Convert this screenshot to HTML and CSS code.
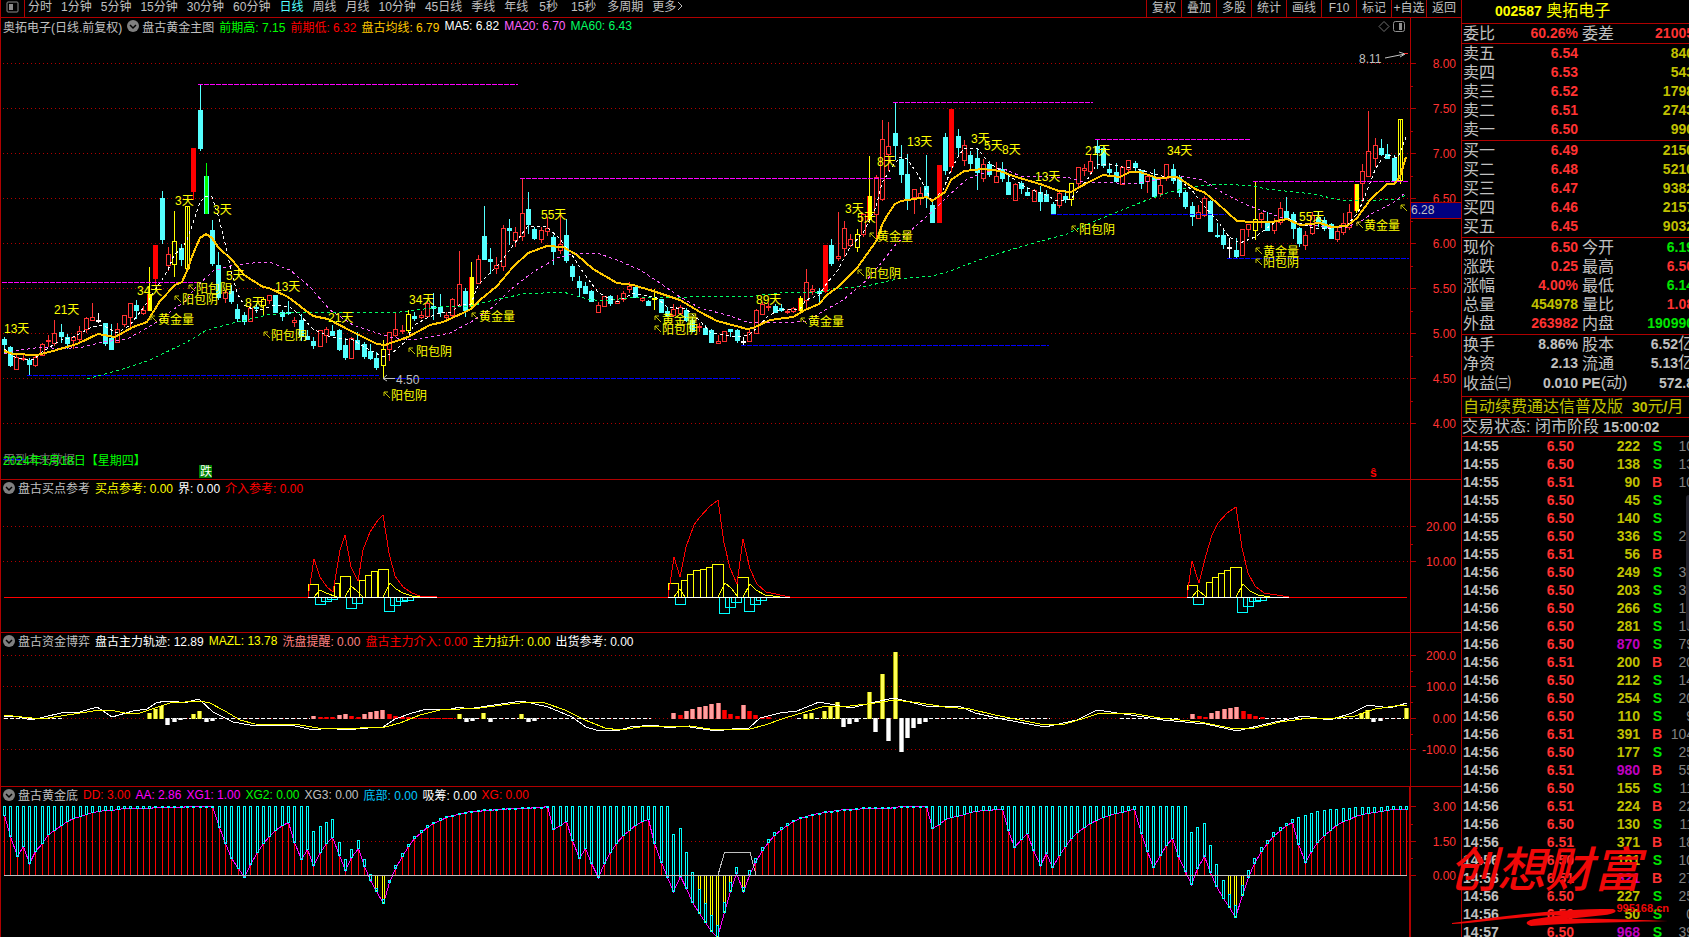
FILE: index.html
```
<!DOCTYPE html>
<html lang="zh-CN">
<head>
  <meta charset="UTF-8" />
  <meta name="viewport" content="width=device-width, initial-scale=1.0"/>
  <title>002587 奥拓电子</title>
  <link rel="stylesheet" href="styles.css">
</head>
<body>
  <div class="terminal">
    <main class="charts">
      <!-- Period + tool bar -->
      <nav class="toolbar">
        <button class="layout-btn" aria-label="布局">
          <svg width="13" height="12" viewBox="0 0 13 12"><rect x="1" y="1" width="11" height="10" rx="1" fill="none" stroke="#8c8c8c"/><rect x="3" y="3" width="4" height="6" fill="#8c8c8c"/></svg>
        </button>
        <div class="periods">
          <button>分时</button>
          <button>1分钟</button>
          <button>5分钟</button>
          <button>15分钟</button>
          <button>30分钟</button>
          <button>60分钟</button>
          <button class="active">日线</button>
          <button>周线</button>
          <button>月线</button>
          <button>10分钟</button>
          <button>45日线</button>
          <button>季线</button>
          <button>年线</button>
          <button class="seconds">5秒</button>
          <button class="seconds">15秒</button>
          <button>多周期</button>
          <button>更多<svg width="8" height="10" viewBox="0 0 8 10"><path d="M2 1 L6 5 L2 9" fill="none" stroke="#c0c0c0"/></svg></button>
        </div>
        <div class="tools">
          <button>复权</button>
          <button>叠加</button>
          <button>多股</button>
          <button>统计</button>
          <button>画线</button>
          <button>F10</button>
          <button>标记</button>
          <button>+自选</button>
          <button>返回</button>
        </div>
      </nav>

      <!-- K line -->
      <section class="panel">
        <div class="legend">
          <span class="silver">奥拓电子(日线.前复权)</span>
          <svg class="fold" viewBox="0 0 12 12"><circle cx="6" cy="6" r="6" fill="#808080"/><path d="M3 5 L6 8 L9 5" fill="none" stroke="#000" stroke-width="1.5"/></svg>
          <span class="silver">盘古黄金主图</span>
          <span class="green">前期高: 7.15</span>
          <span class="red">前期低: 6.32</span>
          <span class="gold">盘古均线: 6.79</span>
          <span class="white">MA5: 6.82</span>
          <span class="pink">MA20: 6.70</span>
          <span class="mint">MA60: 6.43</span>
          <svg class="corner" width="28" height="13" viewBox="0 0 28 13"><path d="M6 1.500 L11 6.500 L6 11.500 L1 6.500 Z" fill="none" stroke="#707070"/><rect x="15.500" y="1.500" width="11" height="10" rx="2" fill="none" stroke="#909090"/><rect x="21" y="3" width="3" height="7" fill="#909090"/></svg>
        </div>
        <svg class="plot plot-main" id="mainPlot" viewBox="1 36 1409 443" preserveAspectRatio="none"></svg>
        <svg class="axis" id="mainAxis" viewBox="1411 18 50 461" preserveAspectRatio="none"></svg>
      </section>

      <!-- Buy point reference -->
      <section class="panel">
        <div class="legend">
          <svg class="fold" viewBox="0 0 12 12"><circle cx="6" cy="6" r="6" fill="#808080"/><path d="M3 5 L6 8 L9 5" fill="none" stroke="#000" stroke-width="1.5"/></svg>
          <span class="silver">盘古买点参考</span>
          <span class="yellow">买点参考: 0.00</span>
          <span class="white">界: 0.00</span>
          <span class="red">介入参考: 0.00</span>
        </div>
        <svg class="plot plot-buy" id="buyPlot" viewBox="1 497 1409 135" preserveAspectRatio="none"></svg>
        <svg class="axis" id="buyAxis" viewBox="1411 480 50 152" preserveAspectRatio="none"></svg>
      </section>

      <!-- Capital flow -->
      <section class="panel">
        <div class="legend">
          <svg class="fold" viewBox="0 0 12 12"><circle cx="6" cy="6" r="6" fill="#808080"/><path d="M3 5 L6 8 L9 5" fill="none" stroke="#000" stroke-width="1.5"/></svg>
          <span class="silver">盘古资金博弈</span>
          <span class="white">盘古主力轨迹: 12.89</span>
          <span class="yellow">MAZL: 13.78</span>
          <span class="salmon">洗盘提醒: 0.00</span>
          <span class="red">盘古主力介入: 0.00</span>
          <span class="yellow">主力拉升: 0.00</span>
          <span class="white">出货参考: 0.00</span>
        </div>
        <svg class="plot plot-flow" id="flowPlot" viewBox="1 650 1409 136" preserveAspectRatio="none"></svg>
        <svg class="axis" id="flowAxis" viewBox="1411 633 50 153" preserveAspectRatio="none"></svg>
      </section>

      <!-- Golden bottom -->
      <section class="panel selected">
        <div class="legend">
          <svg class="fold" viewBox="0 0 12 12"><circle cx="6" cy="6" r="6" fill="#808080"/><path d="M3 5 L6 8 L9 5" fill="none" stroke="#000" stroke-width="1.5"/></svg>
          <span class="silver">盘古黄金底</span>
          <span class="red">DD: 3.00</span>
          <span class="magenta">AA: 2.86</span>
          <span class="magenta">XG1: 1.00</span>
          <span class="green">XG2: 0.00</span>
          <span class="silver">XG3: 0.00</span>
          <span class="sky">底部: 0.00</span>
          <span class="white">吸筹: 0.00</span>
          <span class="red">XG: 0.00</span>
        </div>
        <svg class="plot plot-bottom" id="bottomPlot" viewBox="1 804 1409 133" preserveAspectRatio="none"></svg>
        <svg class="axis" id="bottomAxis" viewBox="1411 787 50 150" preserveAspectRatio="none"></svg>
      </section>
    </main>

    <!-- Quote side bar -->
    <aside class="quote">
      <h1><b>002587</b> 奥拓电子</h1>
      <table class="info single">
        <tr><th>委比</th><td class="up">60.26%</td><th>委差</th><td class="up">21005</td></tr>
      </table>
      <table class="info">
        <tr><th>卖五</th><td class="up">6.54</td><th></th><td class="vol">840</td></tr>
        <tr><th>卖四</th><td class="up">6.53</td><th></th><td class="vol">543</td></tr>
        <tr><th>卖三</th><td class="up">6.52</td><th></th><td class="vol">1798</td></tr>
        <tr><th>卖二</th><td class="up">6.51</td><th></th><td class="vol">2743</td></tr>
        <tr><th>卖一</th><td class="up">6.50</td><th></th><td class="vol">990</td></tr>
      </table>
      <table class="info">
        <tr><th>买一</th><td class="up">6.49</td><th></th><td class="vol">2150</td></tr>
        <tr><th>买二</th><td class="up">6.48</td><th></th><td class="vol">5210</td></tr>
        <tr><th>买三</th><td class="up">6.47</td><th></th><td class="vol">9382</td></tr>
        <tr><th>买四</th><td class="up">6.46</td><th></th><td class="vol">2157</td></tr>
        <tr><th>买五</th><td class="up">6.45</td><th></th><td class="vol">9032</td></tr>
      </table>
      <table class="info">
        <tr><th>现价</th><td class="up">6.50</td><th>今开</th><td class="down">6.19</td></tr>
        <tr><th>涨跌</th><td class="up">0.25</td><th>最高</th><td class="up">6.50</td></tr>
        <tr><th>涨幅</th><td class="up">4.00%</td><th>最低</th><td class="down">6.14</td></tr>
        <tr><th>总量</th><td class="vol">454978</td><th>量比</th><td class="up">1.08</td></tr>
        <tr><th>外盘</th><td class="up">263982</td><th>内盘</th><td class="down">190990</td></tr>
      </table>
      <table class="info stats">
        <tr><th>换手</th><td>8.86%</td><th>股本</th><td>6.52<i>亿</i></td></tr>
        <tr><th>净资</th><td>2.13</td><th>流通</th><td>5.13<i>亿</i></td></tr>
        <tr><th>收益㈢</th><td>0.010</td><th><b>PE</b>(动)</th><td>572.8</td></tr>
      </table>
      <a class="promo" href="#">自动续费通达信普及版 &nbsp;<b>30</b>元<b>/</b>月</a>
      <p class="status">交易状态: 闭市阶段 <b>15:00:02</b></p>
      <table class="ticks">
        <tbody id="ticks"></tbody>
      </table>
      <div class="drawer"></div>
    </aside>

    <div class="watermark">
      <span class="brand">创想财富</span>
      <svg width="220" height="24" viewBox="0 0 220 24">
        <path d="M3 19 C50 13 100 5 164 5 C170 7 165 10 156 11 L118 15 C150 14 190 16 219 17 C180 18 120 19 82 22 C74 20 78 16 86 15 L112 11 C70 12 40 18 3 20 Z" fill="#f00808"/>
      </svg>
      <span class="site">995168.cn</span>
    </div>
  </div>

  <script src="charts.js"></script>
</body>
</html>
```
FILE: styles.css
```
* {
  box-sizing: border-box;
}

body {
  margin: 0;
  background: #000;
  color: #c0c0c0;
  font-family: "Liberation Sans", "Noto Sans CJK SC", sans-serif;
  font-size: 12px;
  overflow: hidden;
}

button {
  padding: 0;
  border: none;
  background: none;
  color: inherit;
  font: inherit;
  cursor: pointer;
}

.terminal {
  position: relative;
  display: grid;
  grid-template-columns: 1fr 228px;
  height: 100vh;
  overflow: hidden;
}

.charts {
  min-width: 0;
}

/* toolbar */
.toolbar {
  display: flex;
  height: 18px;
  line-height: 15px;
  border-bottom: 1px solid #b00000;
  border-left: 1px solid #b00000;
  white-space: nowrap;
}

.layout-btn {
  width: 24px;
  padding-bottom: 3px;
  border-right: 1px solid #b00000;
  line-height: 0;
}

.periods {
  display: flex;
  flex: 1;
  gap: 9px;
  padding-left: 3px;
}

.periods button,
.tools button {
  display: block;
  height: 15px;
  line-height: 15px;
}

.periods .seconds {
  padding: 0 2px;
}

.periods .active {
  color: #54ffff;
}

.tools {
  display: flex;
}

.tools button {
  width: 35px;
  height: 17px;
  border-left: 1px solid #b00000;
}

/* chart panels */
.panel {
  display: grid;
  grid-template-columns: 1fr 51px;
  border-left: 1px solid #b00000;
  border-bottom: 1px solid #b00000;
}

.legend {
  display: flex;
  align-items: center;
  gap: 5px;
  height: 17px;
  padding: 0 0 2px 2px;
  white-space: nowrap;
}

.panel:first-of-type .legend {
  height: 18px;
}

.fold {
  width: 12px;
  height: 12px;
  margin-right: -2px;
}

.corner {
  margin-left: auto;
  margin-right: 4px;
}

.plot {
  grid-column: 1;
  display: block;
  width: 100%;
}

.plot-main { height: 443px; }
.plot-buy { height: 135px; }
.plot-flow { height: 136px; }
.plot-bottom { height: 133px; }

.axis {
  grid-column: 2;
  grid-row: 1 / 3;
  display: block;
  width: 51px;
  height: 100%;
  border-left: 1px solid #b00000;
}

.selected {
  border-bottom: none;
}

.selected .axis {
  outline: 1px solid #b00000;
}

svg text {
  font-size: 12px;
}

.silver { color: #c0c0c0; }
.green { color: #00ff00; }
.red { color: #ff0000; }
.gold { color: #ffc800; }
.white { color: #fff; }
.pink { color: #ff64ff; }
.mint { color: #00ff64; }
.yellow { color: #ffff00; }
.salmon { color: #ff8080; }
.magenta { color: #ff00ff; }
.sky { color: #00c8ff; }

/* quote bar */
.quote {
  position: relative;
  border-left: 1px solid #b00000;
  overflow: hidden;
}

.quote h1 {
  height: 23px;
  margin: 0;
  padding-left: 33px;
  color: #ffff00;
  font-size: 16px;
  font-weight: normal;
  line-height: 21px;
}

.quote b {
  font-size: 14px;
}

.info,
.ticks {
  width: calc(100% + 5px);
  table-layout: fixed;
  border-collapse: separate;
  border-spacing: 0;
  border-top: 1px solid #b00000;
}

.info {
  margin-bottom: 1px;
}

.info tr {
  height: 19px;
}

.info th {
  width: 50px;
  padding: 0 0 0 1px;
  font-size: 16px;
  font-weight: normal;
  line-height: 19px;
  text-align: left;
  white-space: nowrap;
}

.info td {
  padding: 0;
  font-size: 14px;
  font-weight: bold;
  line-height: 19px;
  text-align: right;
  white-space: nowrap;
}

.info th + td {
  width: 64px;
}

.info th:nth-child(3) {
  padding-left: 4px;
}

.info i {
  font-size: 16px;
  font-style: normal;
  font-weight: normal;
  line-height: 16px;
}

.single {
  margin-bottom: 0;
}

.stats {
  margin-bottom: 3px;
}

.up { color: #ff3232; }
.down { color: #00e600; }
.vol { color: #c0c000; }
.big { color: #c000c0; }

.promo {
  display: block;
  height: 21px;
  padding-left: 1px;
  border-top: 1px solid #b00000;
  color: #c0c000;
  font-size: 16px;
  line-height: 20px;
  text-decoration: none;
  white-space: nowrap;
}

.status {
  height: 19px;
  margin: 0;
  border-top: 1px solid #b00000;
  font-size: 16px;
  line-height: 18px;
  white-space: nowrap;
}

.ticks td {
  height: 18px;
  padding: 0;
  font-size: 14px;
  font-weight: bold;
  line-height: 18px;
  text-align: right;
}

.ticks td:nth-child(1) { width: 38px; padding-left: 1px; text-align: left; }
.ticks td:nth-child(2) { width: 74px; }
.ticks td:nth-child(3) { width: 66px; }
.ticks td:nth-child(4) { width: 22px; }
.ticks td:nth-child(5) { color: #808080; font-weight: normal; }

.drawer {
  position: absolute;
  right: 0;
  top: 495px;
  width: 3px;
  height: 134px;
  border-radius: 3px 0 0 3px;
  background: #23232d;
}

/* watermark */
.watermark {
  position: absolute;
  right: 20px;
  top: 838px;
  width: 220px;
  color: #f00808;
}

.watermark .brand {
  display: block;
  height: 66px;
  font-size: 48px;
  font-style: italic;
  font-weight: 500;
  line-height: 66px;
}

.watermark svg {
  display: block;
}

.watermark .site {
  position: absolute;
  right: 0;
  top: 64px;
  font-size: 11px;
  font-weight: bold;
}
```
FILE: charts.js
```
const RED = '#ff3232';
const CYAN = '#54ffff';
const YELLOW = '#ffff00';
const GRID = '#b00000';

function add(parent, tag, attrs, text) {
  const el = document.createElementNS('http://www.w3.org/2000/svg', tag);
  for (const key in attrs) el.setAttribute(key, attrs[key]);
  if (text !== undefined) el.textContent = text;
  parent.appendChild(el);
  return el;
}

function rect(svg, x, y, w, h, fill) {
  add(svg, 'rect', { x, y, width: w, height: Math.max(h, 1), fill, 'shape-rendering': 'crispEdges' });
}

function box(svg, x, y, w, h, stroke) {
  add(svg, 'rect', { x: x + 0.5, y: y + 0.5, width: w - 1, height: Math.max(h - 1, 1), fill: 'none', stroke, 'shape-rendering': 'crispEdges' });
}

function line(svg, points, stroke, width, dash) {
  const attrs = { points, fill: 'none', stroke, 'stroke-width': width || 1, 'shape-rendering': 'crispEdges' };
  if (dash) attrs['stroke-dasharray'] = dash;
  add(svg, 'polyline', attrs);
}

function grid(svg, rows) {
  rows.forEach(y => line(svg, `3,${y + 0.5} 1408,${y + 0.5}`, GRID, 1, '1 3'));
}

// five pixels on, one off
function level(svg, x1, x2, y, color) {
  for (let x = x1; x < x2; x += 6) rect(svg, x, y, Math.min(5, x2 - x), 1, color);
}

function axis(id, labels, minor) {
  const svg = document.getElementById(id);
  labels.forEach(([y, text]) => {
    rect(svg, 1411, y, 5, 1, GRID);
    add(svg, 'text', { x: 1456, y: y + 5, 'text-anchor': 'end', fill: RED }, text);
  });
  minor.forEach(y => rect(svg, 1411, y, 2, 1, GRID));
  return svg;
}

// ---------- K line ----------
// x, high, body top, body bottom, low, kind
// c falling, r rising, R limit up, Y/y signal (filled/hollow), d double box, g green, w doji
const candles = `
4 337 339 344 353 c|10 346 347 365 367 c|16 353 357 369 369 r|23 355 358 359 361 r|29 358 360 364 375 c
35 355 357 365 367 r|42 343 344 355 356 r|48 335 340 341 347 r|54 320 333 343 346 r|61 324 332 336 343 c
67 334 337 343 349 c|73 336 337 340 349 r|79 326 331 339 343 r|86 317 318 329 333 r|92 303 317 320 321 r
98 313 320 321 323 w|105 323 323 343 346 c|111 324 338 349 349 c|117 323 329 342 343 r|124 315 315 324 327 r
130 303 303 317 327 r|136 300 305 310 319 c|143 306 310 313 315 r|149 267 294 310 310 Y|155 245 245 278 286 R
162 191 198 239 244 c|168 247 254 265 271 r|174 211 241 264 277 y|181 244 248 259 266 c|187 206 206 268 270 d
193 148 148 191 200 R|200 85 110 148 151 c|206 163 176 213 213 g|212 220 230 263 266 c|218 252 265 297 300 c
225 290 292 298 303 r|231 285 291 301 304 c|237 304 309 318 322 c|244 312 315 321 325 c|250 303 308 321 321 r
256 303 307 308 313 c|263 297 299 305 316 y|269 295 295 300 304 r|275 295 295 312 312 c|282 310 312 316 321 c
288 301 312 313 315 c|294 317 320 322 327 r|301 314 320 336 341 c|307 330 336 339 340 c|313 337 341 345 349 c
320 330 330 346 347 r|326 327 329 335 343 r|332 325 331 335 335 c|339 329 330 349 351 c|345 338 345 357 360 c
351 337 338 358 358 r|357 332 340 349 349 c|364 342 344 356 359 c|370 344 351 358 360 c|376 352 358 367 370 c
383 340 349 365 378 y|389 332 332 349 361 r|395 313 329 335 337 r|402 325 330 331 334 r|408 310 314 330 333 y
414 312 316 318 321 c|421 311 315 317 319 r|427 301 303 316 318 r|433 293 306 308 320 c|440 294 307 312 317 c
446 312 315 317 321 r|452 298 299 315 317 r|459 251 284 305 306 r|465 288 291 310 317 c|471 262 277 306 307 Y
478 255 259 283 283 r|484 206 236 259 260 c|490 248 259 261 274 c|496 257 265 268 274 r|503 225 228 266 271 r
509 219 228 230 245 c|515 227 232 240 247 r|522 178 213 236 241 r|528 192 209 224 234 c|534 227 229 238 240 c
541 227 230 239 243 r|547 217 228 231 236 r|553 235 237 251 265 c|560 215 244 250 254 r|566 219 235 260 263 c
572 264 266 276 281 c|579 276 281 287 297 c|585 282 286 293 294 c|591 290 291 301 301 c|598 302 305 312 312 r
604 296 296 306 306 r|610 295 296 303 306 c|617 295 301 303 303 r|623 291 293 299 302 r|629 282 286 289 293 r
635 286 287 297 297 c|642 297 298 300 302 r|648 300 301 305 305 c|654 289 298 299 310 y|661 299 299 312 313 c
667 307 311 315 317 c|673 304 309 315 317 r|680 305 307 313 315 r|686 308 310 320 322 c|692 317 320 331 332 c
699 323 326 327 332 r|705 325 328 334 335 c|711 329 330 342 343 c|718 335 341 343 344 r|724 331 331 341 341 r
730 329 329 331 337 c|737 329 330 340 343 c|743 337 341 342 345 w|749 330 332 341 341 r|756 309 310 333 334 r
762 302 304 314 315 r|768 303 306 307 311 r|775 304 306 312 313 c|781 304 308 310 312 c|787 309 311 312 314 r
793 307 308 311 313 r|800 296 298 310 313 Y|806 269 282 300 308 r|812 285 289 291 295 r|819 288 291 293 304 c
825 245 245 291 293 R|831 239 245 263 266 c|838 212 256 258 261 r|844 221 228 248 257 r|850 234 239 245 247 r
857 229 234 247 252 y|863 214 214 234 237 r|869 156 196 219 223 Y|876 175 177 214 238 r|882 120 139 199 201 r
888 122 146 154 171 r|895 102 133 145 160 c|901 145 159 174 183 c|907 154 174 200 210 c|914 189 189 197 214 r
920 187 193 197 205 r|926 155 186 197 208 c|932 200 205 222 223 c|939 165 165 222 222 R|945 133 137 170 175 c
951 109 109 166 172 R|958 129 136 147 156 c|964 140 145 160 166 r|970 151 155 163 169 c|977 148 158 172 190 c
983 159 164 178 182 r|989 161 164 174 177 c|996 162 176 182 183 r|1002 162 169 178 182 c|1008 175 182 194 194 c
1015 183 184 200 200 r|1021 181 183 188 194 c|1027 187 192 195 196 c|1034 189 190 201 202 r|1040 186 192 201 211 c
1046 190 194 201 202 c|1053 202 204 213 215 c|1059 190 193 205 208 r|1065 190 196 199 203 c|1071 183 183 199 206 y
1078 167 167 183 187 r|1084 164 168 170 176 r|1090 155 161 171 175 r|1097 140 146 152 169 c|1103 145 148 165 168 c
1109 163 169 172 175 c|1116 163 172 181 183 c|1122 166 167 184 185 r|1128 160 160 169 172 r|1135 161 163 167 172 c
1141 170 170 183 189 c|1147 174 176 181 193 r|1154 169 177 196 197 c|1160 179 185 193 197 r|1166 164 164 178 181 r
1173 164 169 180 184 c|1179 175 177 192 197 c|1185 190 192 206 209 c|1192 202 206 216 226 c|1198 205 212 218 219 r
1204 196 198 215 217 r|1210 200 201 231 231 c|1217 223 235 236 238 c|1223 229 235 244 249 c|1229 238 247 248 258 w
1236 238 250 256 258 c|1242 229 229 255 255 r|1248 224 224 229 237 r|1255 181 219 230 240 y|1261 212 213 219 228 r
1267 212 221 230 231 c|1274 218 221 230 234 r|1280 202 208 222 225 r|1286 197 211 217 219 c|1293 212 214 228 239 c
1299 227 228 243 247 c|1305 231 235 245 250 r|1312 212 215 233 235 r|1318 212 217 222 227 c|1324 217 220 228 231 c
1331 223 224 238 238 c|1337 228 231 239 242 r|1343 213 223 232 235 r|1349 204 212 227 230 r|1356 184 184 210 213 Y
1362 164 171 183 202 r|1368 111 151 176 177 r|1375 138 145 158 167 r|1381 139 148 154 156 c|1387 144 154 158 159 c
1394 155 158 180 182 c|1400 119 119 180 184 d`;

const colors = { c: CYAN, r: RED, R: '#ff0000', Y: YELLOW, y: YELLOW, d: YELLOW, g: '#00ff00', w: '#ffffff' };

function drawCandle(svg, row) {
  const parts = row.trim().split(' ');
  const kind = parts[5];
  const [x, high, top, bottom, low] = parts.map(Number);
  const color = colors[kind];
  rect(svg, x, high, 1, top - high, color);
  rect(svg, x, bottom, 1, low - bottom, color);
  if (kind === 'r' || kind === 'y' || kind === 'd') {
    box(svg, x - 2, top, 5, bottom - top + 1, color);
    if (kind === 'd') rect(svg, x, top, 1, bottom - top, color);
  } else {
    rect(svg, x - 2, top, 5, bottom - top + 1, kind === 'g' ? CYAN : color);
    if (kind === 'g') rect(svg, x - 1, top, 3, bottom - top + 1, color);
    if (kind === 'Y') rect(svg, x - 2, top, 1, bottom - top + 1, '#ff0000');
  }
}

const main = document.getElementById('mainPlot');
grid(main, [63, 108, 153, 198, 243, 288, 333, 378, 423]);
candles.trim().split(/[|\n]/).forEach(row => drawCandle(main, row));

// previous highs and lows
[[198, 518, 84], [2, 201, 282], [520, 891, 178], [893, 1093, 102], [1095, 1251, 139], [1253, 1409, 181]]
  .forEach(([x1, x2, y]) => level(main, x1, x2, y, '#ff00ff'));
[[27, 379, 375], [383, 740, 378], [741, 1049, 345], [1051, 1226, 214], [1227, 1409, 258]]
  .forEach(([x1, x2, y]) => level(main, x1, x2, y, '#0000ff'));

// MA60
line(main, '87,379 123,369 150,360 187,342 207,330 233,323 267,315 290,313 333,312 383,312 400,312 440,307 471,306 490,301 523,294 563,292 587,299 603,301 627,298 687,297 753,296 780,293 820,292 833,289 867,286 897,279 933,276 950,271 987,257 1030,244 1067,234 1090,223 1117,212 1147,200 1167,193 1190,187 1223,184 1253,186 1267,189 1313,194 1340,200 1360,201 1400,199 1405,195', '#00ff64', 1, '3 3');
// MA20
line(main, '4,354 20,350 43,347 60,349 83,347 103,342 127,339 147,328 157,322 170,312 187,300 193,290 213,271 233,265 253,263 269,262 290,270 310,287 330,310 353,325 377,333 390,337 410,340 420,339 450,333 471,322 493,307 510,290 533,272 557,258 577,253 597,253 617,260 640,270 660,283 680,297 700,308 727,315 747,322 787,323 807,321 820,313 843,300 867,280 882,262 897,243 917,225 933,211 947,197 967,179 987,172 1002,168 1020,176 1047,177 1067,177 1083,182 1117,183 1137,183 1163,179 1180,176 1203,180 1223,193 1247,205 1280,217 1300,224 1327,227 1347,227 1360,222 1373,213 1393,203 1405,193', '#ff64ff', 1, '3 3');
// MA5
line(main, '4,349 16,358 33,360 42,352 61,340 73,337 92,327 102,325 117,333 130,325 147,303 155,290 162,280 168,270 174,255 182,248 187,240 193,223 200,202 206,196 212,197 218,215 225,243 231,270 237,293 244,305 257,311 275,305 290,307 300,315 313,329 330,337 353,340 370,350 383,357 392,353 405,342 414,325 427,318 440,313 452,312 459,305 471,304 478,285 488,275 500,263 515,243 528,226 547,227 560,239 572,255 585,275 598,292 604,296 617,302 633,293 657,298 667,307 686,309 699,320 711,333 737,337 749,335 758,327 768,316 781,309 800,309 806,300 819,295 827,283 838,270 850,247 863,233 876,207 882,183 892,167 900,157 907,159 917,173 932,201 943,190 951,170 958,157 964,148 977,148 989,163 1008,175 1027,188 1046,195 1057,201 1071,199 1087,180 1097,164 1109,164 1122,167 1135,168 1154,174 1179,180 1192,190 1204,206 1217,220 1229,237 1240,243 1255,237 1274,223 1287,218 1300,223 1313,228 1333,228 1347,225 1358,213 1368,188 1375,170 1381,160 1388,155 1398,158 1406,137', '#ffffff', 1, '3 3');
// trend line
line(main, '4,351 13,354 37,355 53,351 77,344 98,334 115,337 133,327 147,322 160,301 175,285 182,282 187,271 193,254 200,238 206,234 212,238 218,247 233,261 244,275 263,287 269,288 288,297 313,316 328,319 353,332 377,344 385,345 408,337 430,325 443,322 463,313 471,309 480,300 497,286 513,267 528,253 547,246 563,247 577,255 593,269 617,283 633,285 653,291 680,300 700,312 717,321 747,329 753,328 770,320 793,317 805,310 819,304 827,295 838,287 857,268 877,240 882,225 888,214 895,204 901,201 927,197 932,201 945,192 951,180 964,171 983,169 1000,171 1013,176 1040,184 1059,191 1071,192 1087,183 1103,175 1120,177 1130,172 1140,172 1157,178 1177,177 1197,190 1204,192 1217,203 1237,221 1253,222 1272,222 1287,219 1300,225 1320,223 1332,227 1347,226 1357,218 1370,200 1387,184 1394,184 1400,177 1406,157', '#ffc800', 2);

// day counts
[[4, 328, '13天'], [54, 309, '21天'], [137, 290, '34天'], [175, 200, '3天'], [213, 209, '3天'], [226, 275, '5天'],
 [245, 302, '8天'], [275, 286, '13天'], [328, 317, '21天'], [409, 299, '34天'], [541, 214, '55天'], [756, 299, '89天'],
 [845, 208, '3天'], [857, 217, '5天'], [877, 161, '8天'], [907, 141, '13天'], [971, 138, '3天'], [984, 145, '5天'],
 [1002, 149, '8天'], [1035, 176, '13天'], [1085, 150, '21天'], [1167, 150, '34天'], [1299, 216, '55天']]
  .forEach(([x, y, text]) => add(main, 'text', { x, y: y + 5, fill: YELLOW }, text));

// signals
[[189, 288, '阳包阴'], [175, 299, '阳包阴'], [151, 319, '黄金量'], [264, 335, '阳包阴'], [384, 395, '阳包阴'],
 [409, 351, '阳包阴'], [472, 316, '黄金量'], [655, 319, '黄金量'], [655, 329, '阳包阴'], [801, 321, '黄金量'],
 [870, 236, '黄金量'], [858, 273, '阳包阴'], [1072, 229, '阳包阴'], [1256, 251, '黄金量'], [1256, 262, '阳包阴'],
 [1357, 225, '黄金量'], [1401, 208, '']]
  .forEach(([x, y, text]) => {
    add(main, 'path', { d: `M${x} ${y + 1} v-4 h4 M${x} ${y - 3} l6 6`, fill: 'none', stroke: '#c8c800' });
    if (text) add(main, 'text', { x: x + 7, y: y + 5, fill: YELLOW }, text);
  });

add(main, 'text', { x: 396, y: 384, fill: '#c0c0c0' }, '4.50');
add(main, 'path', { d: 'M395 378.5 H383 M387 375 L383 378.5 L387 381', fill: 'none', stroke: '#c0c0c0' });
add(main, 'text', { x: 1359, y: 63, fill: '#c0c0c0' }, '8.11');
add(main, 'path', { d: 'M1385 58 L1405 54 M1399 52 L1405 54 L1400 57', fill: 'none', stroke: '#c0c0c0' });
rect(main, 1404, 53, 4, 1, RED);

add(main, 'text', { x: 3, y: 464, fill: '#707070' }, '用到未来数据');
level(main, 3, 27, 459, '#0000ff');
add(main, 'text', { x: 3, y: 465, fill: '#00ff00' }, '2024年1月18日【星期四】');
rect(main, 199, 465, 13, 13, '#008000');
add(main, 'text', { x: 200, y: 476, fill: '#ffffff' }, '跌');
add(main, 'text', { x: 1370, y: 477, fill: '#ff0000', 'font-weight': 'bold' }, 'ŝ');

const mainAxis = axis('mainAxis',
  [[63, '8.00'], [108, '7.50'], [153, '7.00'], [198, '6.50'], [243, '6.00'], [288, '5.50'], [333, '5.00'], [378, '4.50'], [423, '4.00']],
  [86, 131, 176, 221, 266, 311, 356, 401]);
rect(mainAxis, 1411, 202, 50, 17, '#b00000');
rect(mainAxis, 1411, 203, 50, 15, '#000080');
add(mainAxis, 'text', { x: 1411, y: 214, fill: '#c0c0c0' }, '6.28');

// ---------- buy point reference ----------
const buy = document.getElementById('buyPlot');
grid(buy, [526, 561]);
rect(buy, 4, 597, 1403, 1, '#ff0000');

[[308, 584, 11], [334, 583, 6], [340, 576, 11], [359, 580, 7], [365, 575, 7], [371, 571, 7], [378, 569, 11],
 [668, 583, 11], [681, 580, 7], [687, 574, 7], [693, 570, 8], [700, 569, 7], [706, 567, 7], [712, 564, 12], [737, 577, 12],
 [1187, 585, 11], [1206, 582, 7], [1212, 577, 7], [1218, 573, 7], [1224, 570, 7], [1230, 567, 12]]
  .forEach(([x, y, w]) => box(buy, x, y, w, 598 - y, YELLOW));
[[315, 604, 11], [321, 601, 11], [327, 599, 11], [346, 608, 11], [352, 603, 11], [384, 611, 11], [390, 605, 11], [396, 601, 12], [402, 600, 12],
 [675, 604, 11], [719, 613, 11], [725, 607, 11], [731, 602, 11], [744, 611, 11], [750, 604, 11], [756, 600, 11],
 [1193, 604, 11], [1237, 612, 11], [1243, 606, 11], [1249, 601, 12], [1255, 600, 12]]
  .forEach(([x, y, w]) => box(buy, x, 597, w, y - 596, '#00ffff'));

['314,597 320,590 326,593 337,597', '345,597 351,586 357,591 363,597', '383,597 390,583 396,589 403,593 412,596 420,597',
 '674,597 680,589 685,597', '718,597 725,583 731,588 738,597', '743,597 750,584 756,590 765,595 780,597',
 '1192,597 1198,590 1206,597', '1236,597 1243,584 1250,591 1258,595 1270,597']
  .forEach(points => line(buy, points, YELLOW));
['308,597 314,559 320,577 327,587 333,592 340,550 345,535 351,567 358,581 363,550 370,532 378,520 383,515 389,553 395,576 403,587 412,593 420,596 437,597',
 '668,597 674,557 680,577 686,547 694,525 700,517 709,507 718,500 724,543 730,568 737,584 743,539 750,569 757,584 766,592 790,597',
 '1187,597 1192,561 1199,583 1206,555 1212,535 1218,523 1227,513 1236,507 1242,548 1248,573 1255,586 1264,593 1289,597']
  .forEach(points => line(buy, points, '#ff0000'));
[[308, 437], [668, 790], [1187, 1289]].forEach(([x1, x2]) => rect(buy, x1, 597, x2 - x1, 1, '#ffffff'));

axis('buyAxis', [[526, '20.00'], [561, '10.00']], [544]);

// ---------- capital flow ----------
const flow = document.getElementById('flowPlot');
grid(flow, [655, 686, 718, 749]);
[[4, 64], [165, 310], [318, 330], [457, 651], [797, 1050], [1120, 1180], [1253, 1407]]
  .forEach(([x1, x2]) => line(flow, `${x1},718.5 ${x2},718.5`, '#ffffff', 1, '4 2'));

const ZERO = 718;
// bar with a lit middle, from the zero row to y
function bar(x, y, light, dark) {
  const top = Math.min(y, ZERO);
  const height = Math.abs(y - ZERO) + 1;
  rect(flow, x, top, 5, height, dark);
  rect(flow, x + 1, top, 3, height, light);
}

[[147, 713], [153, 709], [159, 706], [191, 714], [197, 711], [457, 714], [481, 713], [519, 714], [803, 714], [809, 713],
 [822, 711], [828, 707], [835, 702], [867, 692], [880, 674], [893, 652], [1359, 713], [1365, 710], [1404, 708]]
  .forEach(([x, y]) => bar(x, y, '#ffff54', '#a0a000'));
[[165, 724], [172, 721], [178, 719], [204, 721], [210, 720], [464, 721], [470, 720], [488, 721], [526, 721], [532, 720],
 [841, 726], [847, 723], [854, 721], [873, 731], [886, 740], [899, 751], [905, 737], [911, 727], [917, 723], [923, 721], [1371, 721], [1378, 720]]
  .forEach(([x, y]) => bar(x, y, '#ffffff', '#b0b0b0'));
[[311, 716], [337, 715], [343, 714], [362, 714], [368, 712], [374, 711], [380, 710], [671, 713], [684, 711], [690, 709],
 [697, 707], [703, 706], [709, 704], [716, 703], [741, 705], [1190, 714], [1209, 713], [1215, 711], [1222, 709], [1228, 708], [1234, 707]]
  .forEach(([x, y]) => bar(x, y, '#ffa0a0', '#d06060'));
[[318, 717], [324, 717], [330, 717], [349, 716], [356, 717], [387, 714], [393, 716], [400, 717], [406, 717], [678, 715], [722, 710], [728, 714], [735, 716],
 [747, 711], [753, 715], [760, 717], [766, 717], [1197, 716], [1203, 717], [1241, 711], [1247, 714], [1253, 716], [1260, 717]]
  .forEach(([x, y]) => bar(x, y, '#ff0000', '#c00000'));
level(flow, 400, 456, 718, '#ff0000');

line(flow, '4,716 19,717 31,720 44,717 61,713 80,712 97,707 112,717 133,711 147,709 156,703 165,701 174,701 184,703 199,699 213,712 233,722 250,725 291,725 313,730 330,728 344,730 368,728 383,727 395,719 412,713 427,709 451,709 460,707 468,709 494,705 522,701 548,707 572,717 586,727 596,730 620,730 630,727 654,725 669,728 683,726 703,729 717,731 732,729 749,728 760,718 780,713 797,711 819,702 851,708 875,702 894,698 926,706 959,706 975,713 1002,719 1045,727 1077,720 1097,710 1131,715 1163,720 1206,724 1237,731 1266,724 1303,716 1330,720 1352,713 1368,705 1390,708 1407,703', '#ffffff');
line(flow, '4,715 22,717 41,719 61,716 80,713 100,710 115,711 125,713 140,713 155,708 170,703 185,702 200,701 210,703 225,711 240,720 255,724 300,725 318,728 360,728 385,727 400,723 420,715 440,710 480,708 510,704 530,702 545,703 565,710 585,720 605,728 620,730 640,727 690,726 710,729 730,730 750,729 765,725 785,718 805,712 825,706 850,706 875,703 895,700 920,703 945,707 970,709 995,715 1020,720 1045,725 1065,724 1085,718 1100,713 1130,713 1160,718 1200,722 1235,729 1255,728 1280,722 1310,718 1335,718 1355,716 1375,709 1395,706 1407,705', YELLOW);

axis('flowAxis', [[655, '200.0'], [686, '100.0'], [718, '0.00'], [749, '-100.0']], [671, 702, 734]);

// ---------- golden bottom ----------
// one entry per day: level of AA, or "top/AA" when the box does not start at the cap.
// levels are thirds of a pixel below y = 780, cap 79, zero line 286
const levels = `104 169 227 197 248 212 188 163 149 134 124 115 107 101 97 94 91 89 86 85
85 84 83 83 82 82 80 80 80 79 79 79 79 79 142 190 233 265 292 251
217 190 167 149 136 125 185 236 206 154/254 139/217 127/190 118/170 185/226 238/271 208/232 181/203 238/257 283/299 325/334
358/368 301/307 256/263 220/227 193/197 169/173 151/155 136/140 127/128 115/119 109/110 104/105 100/101 96/97 93/94 91/92 88/89 88/89 86/87 85/86
83/84 83/84 82/83 82/83 81/82 80/81 79 146 134 122 181 233 203 250 290 248 215 188 166 149
134 124 116 188 245 292 163/334 145/287 217/325 277/365 328/398 370/425 406/452 436/470 367/395 307/332 262/280 322/334 271/284 235/245
202/211 178/185 157/164 142/146 130/134 121/122 112/113 107/108 101/102 98/99 94/97 92/93 89/90 86/87 86/87 84/86 82/83 82/83 82/83 82/83
82/83 80/82 79 79 79 79 79 143 131 118 112 107 101 95 92 91 89 86 86 149
200 176 158 209 254 218 260 224 197 173 155 140 128 119 110 104 98 95 91 88
158 212 260 224 194 173 227 272 157/311 142/263 130/227 196/275 253/317 301/353 343/382 376/410 316/344 271/290 233/248 202/214
179/188 157/167 142/149 130/134 118/125 112/191 106/245 100/212 94/185 91/164 88/149 88/134 85/122 85/116 82/107 82/101 82/98 82/95 82/92 89
86 86 86`;

const bottom = document.getElementById('bottomPlot');
const toY = value => Math.round(780 + value / 3);
grid(bottom, [841]);
const days = levels.split(/\s+/).map((entry, i) => {
  const pair = entry.split('/').map(Number);
  const top = pair.length === 2 ? pair[0] : 79;
  return { x: Math.round(3.9 + i * 6.315), top: toY(top), aa: toY(pair[pair.length - 1]) };
});
days.forEach(d => {
  if (d.aa < 875) rect(bottom, d.x, d.aa, 1, 875 - d.aa, '#ff0000');
});
line(bottom, days.map(d => `${d.x + 0.5},${d.aa + 0.5}`).join(' '), '#ff00ff');
days.forEach(d => {
  if (d.top > 880) box(bottom, d.x - 1, 875, 3, d.aa - 875, YELLOW);
  box(bottom, d.x - 1, d.top, 3, d.aa - d.top + 1, '#00ffff');
});
rect(bottom, 4, 875, 1403, 1, '#c0c0c0');
line(bottom, '718,875 724.5,852.5 750,852.5 756,875', '#c0c0c0');

axis('bottomAxis', [[806, '3.00'], [841, '1.50'], [875, '0.00']], [824, 858]);

// ---------- ticks ----------
const ticks = `14:55 6.50 222 S 10|14:55 6.50 138 S 13|14:55 6.51 90 B 10|14:55 6.50 45 S 4|14:55 6.50 140 S 6|14:55 6.50 336 S 24|14:55 6.51 56 B 5
14:56 6.50 249 S 34|14:56 6.50 203 S 31|14:56 6.50 266 S 15|14:56 6.50 281 S 18|14:56 6.50 870 S 79|14:56 6.51 200 B 20|14:56 6.50 212 S 14
14:56 6.50 254 S 20|14:56 6.50 110 S 9|14:56 6.51 391 B 104|14:56 6.50 177 S 25|14:56 6.51 980 B 55|14:56 6.50 155 S 11|14:56 6.51 224 B 22
14:56 6.50 130 S 11|14:56 6.51 371 B 18|14:56 6.50 161 S 10|14:56 6.51 621 B 27|14:56 6.50 227 S 25|14:56 6.50 50 S 0|14:57 6.50 968 S 39`;

document.getElementById('ticks').innerHTML = ticks.split(/[|\n]/).map(row => {
  const [time, price, volume, side, count] = row.split(' ');
  return `<tr><td>${time}</td><td class="up">${price}</td><td class="${volume >= 500 ? 'big' : 'vol'}">${volume}</td>` +
    `<td class="${side === 'S' ? 'down' : 'up'}">${side}</td><td>${count}</td></tr>`;
}).join('');
```
